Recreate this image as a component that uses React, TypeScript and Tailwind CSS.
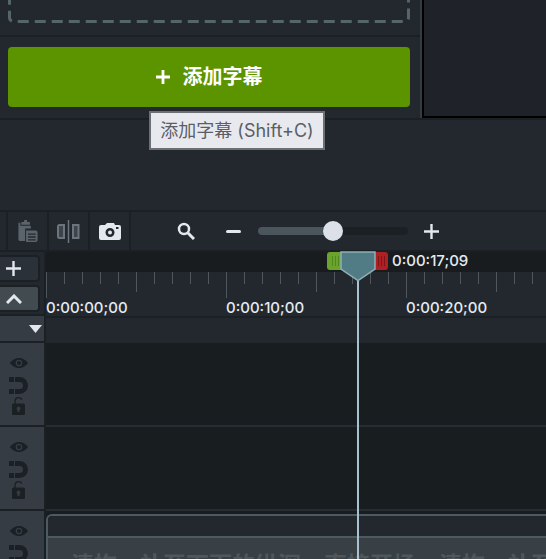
const FONT = { fontFamily: '"Inter", "Noto Sans CJK SC", sans-serif' };

function Eye() {
  return (
    <svg className="mb-[9px]" width="20" height="10" viewBox="0 0 20 11" fill="#1a2024">
      <path fillRule="evenodd" d="M0 5.500C3 1.800 6.300 0 10 0s7 1.800 10 5.500C17 9.200 13.700 11 10 11S3 9.200 0 5.500ZM10 1.800a3.700 3.700 0 1 0 0 7.400 3.700 3.700 0 0 0 0-7.400Z" />
      <circle cx="10" cy="5.500" r="2.200" />
    </svg>
  );
}

function Magnet() {
  return (
    <svg className="mb-[3px]" width="19" height="17" viewBox="0 0 19 17" fill="#1a2024">
      <path d="M0 0h5v5H0zM0 12h5v5H0zM6 0h4.500a8.500 8.500 0 0 1 0 17H6v-5h4.500a3.500 3.500 0 0 0 0-7H6z" />
    </svg>
  );
}

function Lock() {
  return (
    <svg width="13" height="18" viewBox="0 0 13 18" fill="#1a2024">
      <path d="M3 8V4.500C3 2 4.600.7 6.600.7c1.500 0 2.700.8 3.200 2" fill="none" stroke="#1a2024" strokeWidth="1.300" />
      <path fillRule="evenodd" d="M1.500 6.500h10A1.500 1.500 0 0 1 13 8v8.500a1.500 1.500 0 0 1-1.500 1.500h-10A1.500 1.500 0 0 1 0 16.500V8a1.500 1.500 0 0 1 1.500-1.500ZM6.500 9.500a2 2 0 0 0-1 3.700V15h2v-1.800a2 2 0 0 0-1-3.700Z" />
    </svg>
  );
}

function TrackHead() {
  return (
    <div className="flex h-[84px] flex-col items-center border-b-2 border-[#1a2024] pr-[7px] pt-[15px]">
      <Eye />
      <Magnet />
      <Lock />
    </div>
  );
}

function ToolCell({ children, w = "w-[41px]" }: { children: React.ReactNode; w?: string }) {
  return <div className={`flex h-full items-center justify-center border-r-2 border-[#1a2024] ${w}`}>{children}</div>;
}

const ticks = Array.from({ length: 29 }, (_, i) => i);

function Ruler() {
  return (
    <div className="flex h-[44px] flex-col overflow-hidden bg-[#23282f]">
      <div className="flex h-[28px] shrink-0 items-start">
        {ticks.map((i) => (
          <div key={i} className="flex w-[18px] shrink-0 justify-start">
            <div className={`w-px bg-[#4f575d] ${i % 10 === 0 ? "h-[26px]" : i % 5 === 0 ? "h-[20px]" : "h-[12px]"}`} />
          </div>
        ))}
      </div>
      <div className="flex text-[15px] font-medium leading-[16px] text-[#e6ebf2]">
        <span className="w-[180px] shrink-0">0:00:00;00</span>
        <span className="w-[180px] shrink-0">0:00:10;00</span>
        <span className="w-[180px] shrink-0">0:00:20;00</span>
      </div>
    </div>
  );
}

export default function App() {
  return (
    <div className="relative h-[559px] w-[546px] overflow-hidden bg-[#23282f]" style={FONT}>
      {/* upper panels */}
      <div className="flex h-[120px] border-b-2 border-[#1a2024]">
        <div className="flex w-[420px] flex-col">
          <div className="h-[37px] overflow-hidden border-b-2 border-[#1a2024] pl-2">
            <svg className="-mt-[8px] block" width="402" height="31" viewBox="0 0 402 31" fill="none">
              <rect x="1.500" y="1.500" width="399" height="28" rx="4" stroke="#566569" strokeWidth="3" strokeDasharray="11 6" />
            </svg>
          </div>
          <div className="pl-2 pr-[10px] pt-[10px]">
            <button className="flex h-[60px] w-full items-center justify-center gap-[13px] rounded-[4px] bg-[#5c9400] text-[20px] font-bold text-white">
              <svg width="14" height="14" viewBox="0 0 15 15" fill="#fff"><path d="M6 0h3v6h6v3H9v6H6V9H0V6h6z" /></svg>
              <span>添加字幕</span>
            </button>
          </div>
        </div>
        <div className="w-[2px] bg-[#353b42]" />
        <div className="flex-1 border-b-2 border-l-2 border-black bg-[#1f2329]" />
      </div>

      <div className="h-[90px]" />

      {/* toolbar */}
      <div className="flex h-[40px] items-center border-t-2 border-[#1a2024]">
        <div className="h-full w-[8px] border-r-2 border-[#1a2024]" />
        <ToolCell>
          <svg width="20" height="22" viewBox="0 0 20 23" fill="#5b646b">
            <path d="M6 0h3v2h3v3H3V2h3zM0 3h2v3h11v3H7v13H2a2 2 0 0 1-2-2z" />
            <path fillRule="evenodd" d="M8 11h10a2 2 0 0 1 2 2v8a2 2 0 0 1-2 2H8zM10 14v1.500h8V14zM10 17v1.500h8V17zM10 20v1.500h8V20z" />
          </svg>
        </ToolCell>
        <ToolCell>
          <svg width="23" height="23" viewBox="0 0 23 23" fill="none" stroke="#6c757c" strokeWidth="2">
            <path d="M7 5H2.500A1.500 1.500 0 0 0 1 6.500v10A1.500 1.500 0 0 0 2.500 18H7z" fill="#3d454b" />
            <path d="M16 5h5.500v13H16z" fill="#3d454b" />
            <path d="M11.500 0v23" strokeWidth="1.500" />
          </svg>
        </ToolCell>
        <ToolCell>
          <svg width="22" height="17" viewBox="0 0 22 17" fill="#e3e7ee">
            <path fillRule="evenodd" d="M2 2h4l2-2h7l1 2h4a2 2 0 0 1 2 2v11a2 2 0 0 1-2 2H2a2 2 0 0 1-2-2V4a2 2 0 0 1 2-2Zm9 3a4.500 4.500 0 1 0 0 9 4.500 4.500 0 0 0 0-9Z" />
            <circle cx="11" cy="9.500" r="2" />
            <rect x="17" y="4" width="2.500" height="2" fill="#23282f" />
          </svg>
        </ToolCell>
        <div className="flex items-center pl-[46px]">
          <svg width="18" height="18" viewBox="0 0 18 18" fill="none" stroke="#e3e7ee" strokeWidth="2.500">
            <circle cx="7" cy="7" r="5" />
            <path d="M11 11l6 6" strokeWidth="3" />
          </svg>
          <div className="ml-[31px] h-[3px] w-[15px] rounded-sm bg-[#e3e7ee]" />
          <div className="relative ml-[17px] h-[8px] w-[150px] rounded-full bg-[#1a2024]">
            <div className="h-full w-[75px] rounded-l-full bg-[#4a565c]" />
            <div className="absolute left-[65px] top-[-6px] h-[20px] w-[20px] rounded-full bg-[#dce0e8]" />
          </div>
          <svg className="ml-[16px]" width="15" height="15" viewBox="0 0 15 15" fill="#e3e7ee"><path d="M6.300 0h2.400v6.300H15v2.400H8.700V15H6.300V8.700H0V6.300h6.300z" /></svg>
        </div>
      </div>

      {/* timeline */}
      <div className="flex h-[309px] border-t-2 border-[#1a2024]">
        <div className="flex w-[46px] shrink-0 flex-col border-r-2 border-[#1a2024]">
          <div className="flex h-[62px] flex-col gap-[3px] bg-[#23282f] pr-[4px] pt-[3px]">
            <div className="flex h-[27px] items-center justify-center rounded-r-[4px] border-2 border-l-0 border-[#1a2024] bg-[#2b3138] pr-[11px]">
              <svg width="15" height="15" viewBox="0 0 15 15" fill="#e3e7ee"><path d="M6.300 0h2.400v6.300H15v2.400H8.700V15H6.300V8.700H0V6.300h6.300z" /></svg>
            </div>
            <div className="flex h-[27px] items-center justify-center rounded-r-[4px] border-2 border-l-0 border-[#1a2024] bg-[#424c50] pr-[11px]">
              <svg width="16" height="10" viewBox="0 0 16 10" fill="none" stroke="#e3e7ee" strokeWidth="3"><path d="M1 9l7-7 7 7" /></svg>
            </div>
          </div>
          <div className="flex h-[29px] items-center justify-end border-y-2 border-[#1a2024] bg-[#353c44] pr-[2px]">
            <svg width="13" height="8" viewBox="0 0 13 8" fill="#e3e7ee"><path d="M0 0h13L6.500 8z" /></svg>
          </div>
          <div className="flex-1 overflow-hidden bg-[#353c44]">
            <TrackHead />
            <TrackHead />
            <TrackHead />
          </div>
        </div>

        <div className="flex min-w-0 flex-1 flex-col">
          <div className="h-[20px] bg-[#181c1f]" />
          <Ruler />
          <div className="h-[27px] border-t-2 border-[#1a2024] bg-[#23282f]" />
          <div className="h-[84px] border-b-2 border-[#272d33] bg-[#181d20]" />
          <div className="h-[84px] border-b-2 border-[#272d33] bg-[#181d20]" />
          <div className="flex-1 overflow-hidden bg-[#181d20] pt-[3px]">
            <div className="h-[60px] rounded-tl-[6px] border-l-2 border-t-2 border-[#4d5a60]">
              <div className="h-[22px] rounded-tl-[5px] border-b-2 border-[#4d5a60] bg-[#23282f]" />
              <div className="h-[40px] whitespace-nowrap bg-[#383f45] pl-[23px] pt-[15px] text-[23px] font-bold leading-[24px] text-[#4f575d]">
                清拖，补至下面的纵深，直接开场，清拖，补至下面
              </div>
            </div>
          </div>
        </div>
      </div>

      {/* tooltip */}
      <div className="absolute left-[149px] top-[111px] flex h-[39px] w-[176px] items-center justify-center whitespace-nowrap border-2 border-[#6c6f74] bg-[#e8e9ef] text-[18px] text-[#5a5f66]">
        添加字幕 (Shift+C)
      </div>

      {/* playhead */}
      <div className="absolute left-[327px] top-[252px] flex h-[18px] w-[61px] justify-between">
        <div className="flex w-[16px] items-center justify-center gap-[2px] rounded-l-[3px] bg-[#6ba32c]">
          <i className="h-[10px] w-px bg-[#4d8a1c]" /><i className="h-[10px] w-px bg-[#4d8a1c]" /><i className="h-[10px] w-px bg-[#4d8a1c]" />
        </div>
        <div className="flex w-[14px] items-center justify-center gap-[2px] rounded-r-[3px] bg-[#ad2023]">
          <i className="h-[10px] w-px bg-[#7f1518]" /><i className="h-[10px] w-px bg-[#7f1518]" /><i className="h-[10px] w-px bg-[#7f1518]" />
        </div>
      </div>
      <svg className="absolute left-[340px] top-[251px]" width="36" height="31" viewBox="0 0 36 31">
        <path d="M1 1h34v17L18 29.500 1 18z" fill="#517c85" stroke="#8fb0b5" strokeWidth="1.500" />
      </svg>
      <div className="absolute left-[357px] top-[281px] h-[278px] w-[2px] bg-[#a9c2d0]" />
      <div className="absolute left-[392px] top-[252px] text-[15px] font-medium leading-[18px] text-[#e6ebf2]">0:00:17;09</div>
    </div>
  );
}
